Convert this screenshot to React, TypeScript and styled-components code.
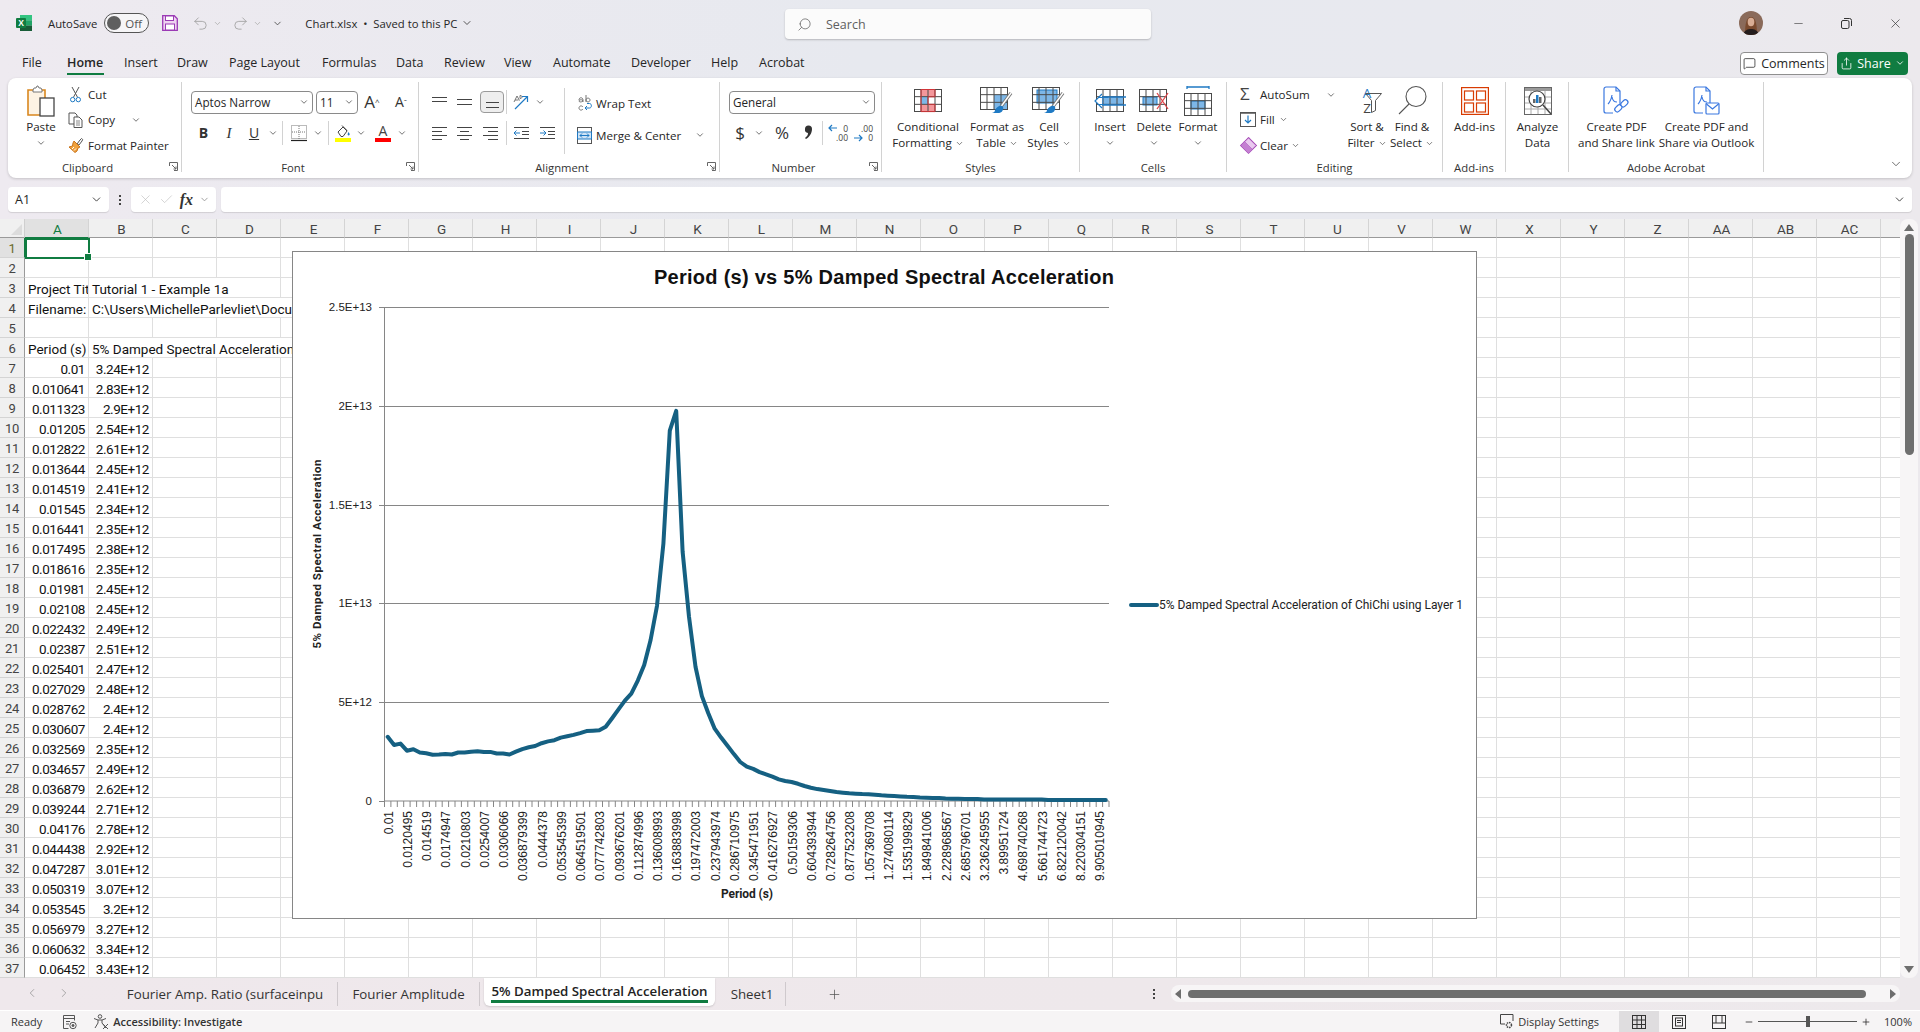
import React from 'react';
import styled, { createGlobalStyle } from 'styled-components';
import { ChevronDown, Search, Minus, X, Check, Undo2, Redo2, ChevronLeft, ChevronRight, Plus, MessageSquare, Share } from 'lucide-react';

const UI = `'Open Sans', 'Noto Sans', sans-serif`;
const CELL = `Roboto, 'Liberation Sans', sans-serif`;
const GREEN = '#107c41';

const GlobalStyle = createGlobalStyle`
  html, body { margin: 0; padding: 0; background: #ece9ee; }
  * { box-sizing: border-box; }
  svg { overflow: visible; }
`;

const Page = styled.div`
  width: 1920px;
  height: 1032px;
  display: flex;
  flex-direction: column;
  overflow: hidden;
  font-family: ${UI};
  font-size: 11.6px;
  color: #262626;
  background: linear-gradient(90deg, #eeeaf0 0%, #e7e9ef 45%, #e8e9ef 75%, #ece9ed 100%);
`;

/* ---------- title bar ---------- */
const TitleBar = styled.div`
  height: 46px;
  display: flex;
  align-items: center;
  padding-left: 16px;
  position: relative;
`;
const TitleItem = styled.div<{ $at: number }>`
  margin-left: ${p => p.$at}px;
  display: flex;
  align-items: center;
  gap: 4px;
  white-space: nowrap;
  font-size: 11.3px;
`;
const Toggle = styled.div`
  width: 45px;
  height: 20px;
  border: 1px solid #555;
  border-radius: 10px;
  display: flex;
  align-items: center;
  padding-left: 2px;
  gap: 4px;
  background: #f6f5f7;
  font-size: 11.5px;
  color: #555;
  &::before {
    content: '';
    width: 14px;
    height: 14px;
    border-radius: 50%;
    background: #5f5f5f;
  }
`;
const SearchBox = styled.div`
  position: absolute;
  left: 785px;
  top: 9px;
  width: 366px;
  height: 30px;
  background: #fbfbfb;
  border-radius: 4px;
  box-shadow: 0 1px 2px rgba(0, 0, 0, 0.22);
  display: flex;
  align-items: center;
  padding-left: 12px;
  gap: 14px;
  color: #5f5f5f;
  font-size: 12.5px;
`;
const WindowControls = styled.div`
  margin-left: auto;
  display: flex;
  align-items: center;
  padding-right: 17px;
  gap: 36px;
  color: #333;
`;
const Avatar = styled.div`
  width: 24px;
  height: 24px;
  margin-right: -7px;
  border-radius: 50%;
  overflow: hidden;
  line-height: 0;
`;

/* ---------- menu ---------- */
const MenuBar = styled.div`
  height: 32px;
  display: flex;
  align-items: center;
  padding: 2px 12px 0 22px;
`;
const MenuItem = styled.div<{ $w: number; $active?: boolean }>`
  width: ${p => p.$w}px;
  font-size: 12.5px;
  line-height: 22px;
  position: relative;
  font-weight: ${p => (p.$active ? 600 : 400)};
  ${p => p.$active && `
    &::after {
      content: '';
      position: absolute;
      left: 0;
      width: 37px;
      bottom: -1px;
      height: 2px;
      background: ${GREEN};
    }
  `}
`;
const MenuRight = styled.div`
  margin-left: auto;
  display: flex;
  gap: 9px;
`;
const CommentsButton = styled.div`
  width: 88px;
  height: 23px;
  background: #fff;
  border: 1px solid #8f8f8f;
  border-radius: 4px;
  display: flex;
  align-items: center;
  justify-content: center;
  gap: 5px;
  font-size: 12.5px;
`;
const ShareButton = styled.div`
  width: 71px;
  height: 23px;
  background: ${GREEN};
  color: #fff;
  border-radius: 4px;
  display: flex;
  align-items: center;
  justify-content: center;
  gap: 4px;
  font-size: 12.5px;
`;

/* ---------- ribbon ---------- */
const Ribbon = styled.div`
  margin: 0 8px;
  height: 100px;
  padding-top: 4px;
  background: #fff;
  border-radius: 8px;
  box-shadow: 0 1px 3px rgba(0, 0, 0, 0.18);
  display: flex;
  position: relative;
`;
const Group = styled.div<{ $w: number }>`
  width: ${p => p.$w}px;
  height: 90px;
  flex: none;
  display: flex;
  flex-direction: column;
  border-right: 1px solid #d2d2d2;
  position: relative;
`;
const GroupBody = styled.div<{ $pad?: number }>`
  height: 76px;
  display: flex;
  padding-left: ${p => p.$pad ?? 0}px;
`;
const GroupLabel = styled.div<{ $launcher?: boolean }>`
  height: 14px;
  line-height: 20px;
  text-align: center;
  font-size: 11.3px;
  color: #333;
  padding-right: ${p => (p.$launcher ? 14 : 0)}px;
`;
const Launcher = styled.svg`
  position: absolute;
  right: 3px;
  bottom: 1px;
  width: 9px;
  height: 9px;
`;
const Big = styled.div<{ $w: number }>`
  width: ${p => p.$w}px;
  flex: none;
  display: flex;
  flex-direction: column;
  align-items: center;
  text-align: center;
  white-space: nowrap;
  line-height: 16px;
`;
const BigIcon = styled.div`
  height: 37px;
  display: flex;
  align-items: center;
  justify-content: center;
`;
const BigLine = styled.div`
  height: 16px;
  display: flex;
  align-items: center;
  gap: 3px;
`;
const Column = styled.div<{ $w?: number; $top?: number }>`
  width: ${p => (p.$w ? `${p.$w}px` : 'auto')};
  flex: none;
  display: flex;
  flex-direction: column;
  padding-top: ${p => p.$top ?? 0}px;
`;
const SmallRow = styled.div<{ $h?: number }>`
  height: ${p => p.$h ?? 26}px;
  display: flex;
  align-items: center;
  white-space: nowrap;
`;
const SmallIcon = styled.div<{ $w?: number; $indent?: number }>`
  width: ${p => p.$w ?? 20}px;
  padding-left: ${p => p.$indent ?? 0}px;
  flex: none;
  display: flex;
  align-items: center;
`;
const Trail = styled.span<{ $ml: number }>`
  margin-left: ${p => p.$ml}px;
  display: flex;
`;
const ToolRow = styled.div<{ $top?: number }>`
  height: 22px;
  margin-top: ${p => p.$top ?? 9}px;
  display: flex;
  align-items: center;
`;
const Slot = styled.div<{ $w: number; $on?: boolean; $ml?: number }>`
  width: ${p => p.$w}px;
  height: 22px;
  margin-left: ${p => p.$ml ?? 0}px;
  flex: none;
  display: flex;
  align-items: center;
  justify-content: center;
  ${p => p.$on && `
    background: #eeeeee;
    border: 1px solid #9a9a9a;
    border-radius: 4px;
  `}
`;
const ToolSep = styled.div<{ $h?: number }>`
  width: 1px;
  height: ${p => p.$h ?? 24}px;
  flex: none;
  background: #d2d2d2;
`;
const Combo = styled.div<{ $w: number; $ml?: number }>`
  width: ${p => p.$w}px;
  height: 23px;
  margin-left: ${p => p.$ml ?? 0}px;
  flex: none;
  border: 1px solid #8a8a8a;
  border-radius: 4px;
  display: flex;
  align-items: center;
  justify-content: space-between;
  padding: 0 3px;
  font-size: 11.7px;
`;
const Glyph = styled.span<{ $size?: number; $weight?: number; $serif?: boolean; $italic?: boolean; $under?: boolean; $color?: string }>`
  font-family: ${p => (p.$serif ? `'Liberation Serif', serif` : UI)};
  font-size: ${p => p.$size ?? 13}px;
  font-weight: ${p => p.$weight ?? 400};
  font-style: ${p => (p.$italic ? 'italic' : 'normal')};
  text-decoration: ${p => (p.$under ? 'underline' : 'none')};
  color: ${p => p.$color ?? '#333'};
  line-height: 1.2;
`;
const CollapseIcon = styled.div`
  position: absolute;
  right: 9px;
  bottom: 7px;
  line-height: 0;
  color: #444;
`;

/* ---------- formula bar ---------- */
const FormulaBar = styled.div`
  margin: 9px 8px 7px;
  height: 25px;
  display: flex;
  align-items: stretch;
`;
const Field = styled.div<{ $w?: number; $ml?: number }>`
  width: ${p => (p.$w ? `${p.$w}px` : 'auto')};
  flex: ${p => (p.$w ? 'none' : 1)};
  margin-left: ${p => p.$ml ?? 0}px;
  background: #fff;
  border-radius: 4px;
  box-shadow: 0 1px 1px rgba(0, 0, 0, 0.12);
  display: flex;
  align-items: center;
  justify-content: space-between;
  padding: 0 6px 0 7px;
  font-size: 12.5px;
`;
const DotsColumn = styled.div<{ $ml: number | string }>`
  margin-left: ${p => (typeof p.$ml === 'number' ? `${p.$ml}px` : p.$ml)};
  width: 3px;
  display: flex;
  flex-direction: column;
  justify-content: center;
  gap: 2px;
  & > i {
    width: 2px;
    height: 2px;
    background: #444;
  }
`;
const Fx = styled.span`
  font-family: 'Liberation Serif', serif;
  font-style: italic;
  font-size: 16px;
  font-weight: 700;
  color: #333;
`;

/* ---------- sheet ---------- */
const SheetArea = styled.div`
  height: 759px;
  display: flex;
  position: relative;
`;
const Sheet = styled.div`
  width: 1900px;
  background: #fff;
  overflow: hidden;
  flex: none;
`;
const HeaderRow = styled.div`
  display: flex;
  height: 19px;
`;
const Corner = styled.div`
  width: 25px;
  flex: none;
  background: #f0f0f0;
  border-right: 1px solid #cfcfcf;
  border-bottom: 1px solid #9a9a9a;
  position: relative;
  &::after {
    content: '';
    position: absolute;
    right: 2px;
    bottom: 2px;
    border-left: 11px solid transparent;
    border-bottom: 11px solid #dcdcdc;
  }
`;
const ColHead = styled.div<{ $on?: boolean }>`
  width: 64px;
  flex: none;
  padding-left: 2px;
  background: ${p => (p.$on ? '#e1e1e1' : '#f0f0f0')};
  border-right: 1px solid #d4d4d4;
  border-bottom: 1px solid ${p => (p.$on ? GREEN : '#9a9a9a')};
  text-align: center;
  font-family: ${CELL};
  font-size: 13.5px;
  line-height: 20px;
  color: ${p => (p.$on ? GREEN : '#444')};
`;
const Row = styled.div`
  display: flex;
  height: 20px;
`;
const RowHead = styled.div<{ $on?: boolean }>`
  width: 25px;
  flex: none;
  background: ${p => (p.$on ? '#e1e1e1' : '#f0f0f0')};
  border-right: 1px solid ${p => (p.$on ? GREEN : '#9a9a9a')};
  border-bottom: 1px solid #d4d4d4;
  text-align: center;
  font-family: ${CELL};
  font-size: 13px;
  line-height: 22px;
  letter-spacing: -0.3px;
  color: ${p => (p.$on ? '#6b6b2a' : '#444')};
`;
const Cell = styled.div<{ $span?: number; $number?: boolean }>`
  width: ${p => 64 * (p.$span ?? 1)}px;
  flex: none;
  border-right: 1px solid #dfdfdf;
  border-bottom: 1px solid #dfdfdf;
  padding: 0 3px;
  font-family: ${CELL};
  font-size: 13.5px;
  letter-spacing: ${p => (p.$number ? '-0.45px' : '0')};
  line-height: 22px;
  color: #111;
  white-space: nowrap;
  overflow: hidden;
  text-align: ${p => (p.$number ? 'right' : 'left')};
`;
const ActiveCell = styled.div`
  position: absolute;
  left: 25px;
  top: 19px;
  width: 65px;
  height: 21px;
  border: 2px solid ${GREEN};
  &::after {
    content: '';
    position: absolute;
    right: -4px;
    bottom: -4px;
    width: 6px;
    height: 6px;
    background: ${GREEN};
    border: 1px solid #fff;
  }
`;
const ChartCard = styled.div`
  position: absolute;
  left: 292px;
  top: 32px;
  width: 1185px;
  height: 668px;
  background: #fff;
  border: 1px solid #868686;
  line-height: 0;
`;
const ScrollRail = styled.div`
  width: 18px;
  height: 759px;
  flex: none;
  background: #f7f5f6;
  border-radius: 8px;
  display: flex;
  flex-direction: column;
  align-items: center;
  padding: 5px 0;
`;
const ScrollThumb = styled.div`
  width: 9px;
  height: 221px;
  margin-top: 3px;
  background: #6e6e6e;
  border-radius: 5px;
`;
const ArrowV = styled.div<{ $down?: boolean }>`
  width: 0;
  height: 0;
  margin-top: ${p => (p.$down ? 'auto' : 0)};
  border-left: 5px solid transparent;
  border-right: 5px solid transparent;
  ${p => (p.$down ? 'border-top: 7px solid #6e6e6e;' : 'border-bottom: 7px solid #6e6e6e;')}
`;

/* ---------- sheet tabs ---------- */
const TabBar = styled.div`
  height: 32px;
  display: flex;
  background: linear-gradient(90deg, #efe8ec, #eee8eb 60%, #ede9ec);
`;
const TabNav = styled.div`
  width: 113px;
  flex: none;
  display: flex;
  gap: 18px;
  align-items: center;
  padding: 0 0 2px 25px;
  color: #8a8a8a;
`;
const Tab = styled.div<{ $w: number; $pad?: number }>`
  width: ${p => p.$w}px;
  height: 24px;
  margin-top: 4px;
  padding-left: ${p => p.$pad ?? 0}px;
  flex: none;
  border-right: 1px solid #cfc9cd;
  text-align: center;
  font-size: 13.3px;
  line-height: 24px;
  white-space: nowrap;
  color: #333;
`;
const ActiveTab = styled.div`
  width: 231px;
  height: 28px;
  margin-left: 4px;
  flex: none;
  background: #fff;
  border-radius: 0 0 6px 6px;
  box-shadow: 0 1px 2px rgba(0, 0, 0, 0.14);
  display: flex;
  justify-content: center;
`;
const ActiveTabText = styled.div`
  height: 25px;
  padding-top: 3px;
  border-bottom: 3px solid ${GREEN};
  font-size: 13.3px;
  font-weight: 600;
  line-height: 20px;
  white-space: nowrap;
  color: #222;
`;
const AddTab = styled.div`
  width: 96px;
  flex: none;
  display: flex;
  align-items: center;
  justify-content: center;
  color: #555;
`;
const HorizontalScroll = styled.div`
  width: 729px;
  height: 17px;
  margin: 7px 20px 0 15px;
  flex: none;
  background: #f7f5f6;
  border-radius: 8px;
  display: flex;
  align-items: center;
  padding: 0 4px;
`;
const HThumb = styled.div`
  width: 678px;
  height: 8px;
  margin-left: 7px;
  margin-right: auto;
  background: #6e6e6e;
  border-radius: 4px;
`;
const ArrowH = styled.div<{ $right?: boolean }>`
  width: 0;
  height: 0;
  border-top: 5px solid transparent;
  border-bottom: 5px solid transparent;
  ${p => (p.$right ? 'border-left: 6px solid #6e6e6e;' : 'border-right: 6px solid #6e6e6e;')}
`;

/* ---------- status bar ---------- */
const StatusBar = styled.div`
  height: 22px;
  display: flex;
  align-items: center;
  background: #f6f4f5;
  border-top: 1px solid #fff;
  font-size: 11px;
  color: #333;
  padding: 0 8px 0 11px;
`;
const StatusItem = styled.div<{ $ml?: number | string; $bold?: boolean }>`
  margin-left: ${p => (typeof p.$ml === 'string' ? p.$ml : `${p.$ml ?? 0}px`)};
  display: flex;
  align-items: center;
  gap: 4px;
  white-space: nowrap;
  font-weight: ${p => (p.$bold ? 600 : 400)};
`;
const ViewButton = styled.div<{ $on?: boolean }>`
  width: 40px;
  height: 21px;
  display: flex;
  align-items: center;
  justify-content: center;
  background: ${p => (p.$on ? '#dfdddf' : 'transparent')};
`;
const ViewGroup = styled.div`
  margin-left: 20px;
  display: flex;
`;
const ZoomTrack = styled.div`
  width: 99px;
  height: 1px;
  background: #555;
  position: relative;
  &::after {
    content: '';
    position: absolute;
    left: 48px;
    top: -5px;
    width: 4px;
    height: 11px;
    background: #555;
  }
`;

/* ---------- icons ---------- */
const Chev = ({ size = 10 }: { size?: number }) => <ChevronDown size={size} strokeWidth={1.8} color="#444" />;

const BLUE = '#1f7ac4';

const ExcelLogo = () => (
  <svg width="16" height="16" viewBox="0 0 16 16">
    <rect x="4" y="0" width="12" height="5.4" fill="#33c481" />
    <rect x="4" y="5.3" width="12" height="5.4" fill="#21a366" />
    <rect x="4" y="10.6" width="12" height="5.4" fill="#185c37" />
    <rect x="0" y="3" width="10" height="10" rx="1" fill="#107c41" />
    <text x="5" y="11" fontSize="8.5" fontWeight="700" fill="#fff" textAnchor="middle" fontFamily="Liberation Sans">X</text>
  </svg>
);
const SaveIcon = () => (
  <svg width="16" height="16" viewBox="0 0 16 16">
    <path d="M.7.7h11.6l3 3v11.6H.7z" fill="#eed3f0" stroke="#9b3bb5" strokeWidth="1.3" />
    <rect x="3.5" y="1" width="8" height="4.5" fill="#fff" stroke="#9b3bb5" />
    <rect x="3.5" y="9" width="9" height="6" fill="#fff" stroke="#9b3bb5" />
  </svg>
);
const PasteIcon = () => (
  <svg width="30" height="32" viewBox="0 0 30 32">
    <path d="M2 5h17v25H2z" fill="#fdf3e4" stroke="#d9871e" strokeWidth="1.6" />
    <path d="M7 5l1-2h2l1-2h1l1 2h2l1 2v2H7z" fill="#fff" stroke="#777" />
    <rect x="14" y="13" width="14" height="18" fill="#fff" stroke="#444" strokeWidth="1.3" />
  </svg>
);
const CutIcon = () => (
  <svg width="11" height="17" viewBox="0 0 11 17" fill="none" stroke="#555" strokeWidth="1">
    <path d="M2 1l5.4 10M9 1L3.6 11" />
    <circle cx="2.7" cy="13.6" r="2.2" stroke={BLUE} />
    <circle cx="8.3" cy="13.6" r="2.2" stroke={BLUE} />
  </svg>
);
const CopyIcon = () => (
  <svg width="15" height="16" viewBox="0 0 15 16" fill="#fff" stroke="#555">
    <path d="M1 1h6l2 2v9H1z" />
    <path d="M6 5h5l3 3v7.5H6z" />
    <path d="M8 9h4M8 11h4M8 13h4" stroke="#888" />
  </svg>
);
const PainterIcon = () => (
  <svg width="16" height="16" viewBox="0 0 16 16">
    <path d="M9 7l3-4 1.5-1.5 1.2 1L14 4l-3 4z" fill="#fff" stroke="#555" />
    <path d="M6 4l6 6-2 1-1 3-2 1.5L1 10l3.5-1L5 6z" fill="#f0a23e" stroke="#c9731a" />
    <path d="M4 12l2-2M6 13.5l2-2" stroke="#fff" />
  </svg>
);
const Launch = () => (
  <Launcher viewBox="0 0 9 9" fill="none" stroke="#666">
    <path d="M.5 4V.5h8v8H5" />
    <path d="M3 3l4 4M7 4.5V7H4.5" />
  </Launcher>
);
const LineIcon = ({ rows, w = 15, color = '#444' }: { rows: [number, number, number][]; w?: number; color?: string }) => (
  <svg width={w} height="14" viewBox={`0 0 ${w} 14`} stroke={color} strokeWidth="1">
    {rows.map(([a, b, y]) => <path key={y} d={`M${a} ${y + 0.5}H${b}`} />)}
  </svg>
);
const BordersIcon = () => (
  <svg width="16" height="16" viewBox="0 0 16 16" fill="none" stroke="#777" strokeDasharray="1 1">
    <rect x=".5" y=".5" width="15" height="13" />
    <path d="M8 1v13M1 7h14" />
    <path d="M0 15.5h16" stroke="#222" strokeDasharray="none" strokeWidth="1.2" />
  </svg>
);
const FillIcon = () => (
  <svg width="16" height="18" viewBox="0 0 16 18">
    <path d="M3 8l5-5 4 4-4 5.5H6z" fill="#fff" stroke="#444" />
    <path d="M7 1.5l5 5" stroke="#444" fill="none" />
    <path d="M13.5 8c1 1.500 1.500 2.300 1 3s-1.600.6-1.800-.2.300-1.600.8-2.800z" fill={BLUE} />
    <rect y="14" width="16" height="4" fill="#ffff00" />
  </svg>
);
const FontColorBar = styled.div`
  width: 16px;
  height: 18px;
  display: flex;
  flex-direction: column;
  align-items: center;
  font-size: 14px;
  line-height: 14px;
  color: #444;
  &::after {
    content: '';
    width: 16px;
    height: 4px;
    flex: none;
    background: #ff0000;
  }
`;
const OrientIcon = () => (
  <svg width="18" height="18" viewBox="0 0 18 18" fill="none">
    <path d="M2 9l3-6 2.500 4.500M3 7h3.500M8 2.500c1.500 0 2 .6 2 1.500s-.6 1.500-2 1.500z" stroke="#666" strokeWidth=".9" />
    <path d="M3 16L15 4M10 3.5h5.500V9" stroke={BLUE} strokeWidth="1.2" />
  </svg>
);
const IndentIcon = ({ flip }: { flip?: boolean }) => (
  <svg width="15" height="14" viewBox="0 0 15 14" fill="none" stroke="#444">
    <path d="M0 1.5h15M8 5.5h7M8 8.5h7M0 12.5h15" />
    <path d={flip ? 'M0 7h6M3.5 4.5L6 7l-2.5 2.500' : 'M6 7H0M2.5 4.5L0 7l2.5 2.500'} stroke={BLUE} />
  </svg>
);
const WrapIcon = () => (
  <svg width="14" height="18" viewBox="0 0 14 18" fill="none">
    <path d="M1 6c0-3 4-3 4 0v2M5 6.500C3 5 1 6 1 7s2 1.500 4 0M8 1v7M8 6c0-2.500 4-2.500 4 0s-4 2.500-4 0M5 13c-1.500-2-4-1-4 1s2.500 3 4 1" stroke="#666" strokeWidth=".9" />
    <path d="M7 14h4.500c2.500 0 2.500-4.500 0-4.500H9M9 12l-2 2 2 2" stroke={BLUE} />
  </svg>
);
const MergeIcon = () => (
  <svg width="15" height="17" viewBox="0 0 15 17" fill="none">
    <rect x=".5" y=".5" width="14" height="16" stroke="#555" />
    <rect x=".5" y="5" width="14" height="7" fill="#cfe4f6" stroke={BLUE} />
    <path d="M3 8.5h9M5 6.500l-2 2 2 2M10 6.500l2 2-2 2" stroke={BLUE} />
  </svg>
);
const DecimalStack = styled.div`
  width: 14px;
  font-size: 8.5px;
  line-height: 9px;
  text-align: right;
  color: #444;
`;
const DecimalWrap = styled.div`
  width: 22px;
  height: 20px;
  display: flex;
  align-items: center;
  justify-content: flex-end;
  position: relative;
  & > svg {
    position: absolute;
    left: 2px;
  }
`;
const Decimals = ({ more }: { more?: boolean }) => (
  <DecimalWrap>
    <svg width="10" height="20" viewBox="0 0 10 20" fill="none" stroke={BLUE} strokeWidth="1.2">
      <path d={more ? 'M9 5H1M4 2L1 5l3 3' : 'M1 15h8M6 12l3 3-3 3'} />
    </svg>
    <DecimalStack>{more ? '0' : '.00'}<br />{more ? '.00' : '0'}</DecimalStack>
  </DecimalWrap>
);
const CommaIcon = () => (
  <svg width="9" height="16" viewBox="0 0 9 16">
    <path d="M1 4a3.5 3.5 0 1 1 7 0c0 4-2.500 8-6 10l-1-1c2-1.500 3-3 3-5A3.5 3.5 0 0 1 1 4z" fill="#333" />
  </svg>
);
const TableBase = ({ w = 28, h = 23, children }: { w?: number; h?: number; children?: React.ReactNode }) => (
  <g>
    {children}
    <g fill="none" stroke="#4a4a4a">
      <rect x=".5" y=".5" width={w - 1} height={h - 1} />
      <path d={`M${w / 4} 1v${h - 2}M${w / 2} 1v${h - 2}M${(3 * w) / 4} 1v${h - 2}M1 ${h / 3}h${w - 2}M1 ${(2 * h) / 3}h${w - 2}`} />
    </g>
  </g>
);
const CFIcon = () => (
  <svg width="28" height="23" viewBox="0 0 28 23">
    <TableBase>
      <rect x="7" y="0" width="14" height="7.6" fill="#f4979b" />
      <rect x="7" y="7.6" width="7" height="7.6" fill="#7db7e8" />
      <rect x="7" y="15.3" width="14" height="7.7" fill="#f4979b" />
    </TableBase>
    <path d="M7 .5h14v7.3H14v7.5h7v7.3H7z" fill="none" stroke="#d13438" />
  </svg>
);
const BrushStroke = () => (
  <g>
    <path d="M31 6L20 21" stroke="#777" strokeWidth="3.2" />
    <path d="M31 6L20 21" stroke="#fff" strokeWidth="1.4" />
    <path d="M15 23c3-5 7-5 8-3s-1 6-4 6-4 0-7 0c2-.5 3-1.500 3-3z" fill={BLUE} />
  </g>
);
const FormatTableIcon = () => (
  <svg width="34" height="28" viewBox="0 0 34 28">
    <TableBase>
      <rect x="14" y="7.6" width="14" height="15.4" fill="#7db7e8" />
    </TableBase>
    <BrushStroke />
  </svg>
);
const CellStylesIcon = () => (
  <svg width="34" height="28" viewBox="0 0 34 28">
    <TableBase>
      <rect x="5" y="3" width="20" height="13" fill="#7db7e8" stroke={BLUE} />
    </TableBase>
    <BrushStroke />
  </svg>
);
const InsertIcon = () => (
  <svg width="32" height="24" viewBox="0 0 32 24">
    <g transform="translate(2 0)">
      <TableBase>
        <rect x="7" y="8" width="21" height="8" fill="#7db7e8" />
      </TableBase>
    </g>
    <path d="M32 8H8v8h24" fill="none" stroke={BLUE} strokeWidth="1.3" />
    <path d="M14 8.5H4.500M14 15.5H4.500M8 5L1 12l7 7" fill="#fff" stroke={BLUE} strokeWidth="1.2" />
  </svg>
);
const DeleteIcon = () => (
  <svg width="30" height="24" viewBox="0 0 30 24">
    <TableBase>
      <rect x="4" y="8" width="14" height="8" fill="#7db7e8" stroke={BLUE} />
    </TableBase>
    <path d="M18 4l11 16M29 4L18 20" stroke="#e0464a" strokeWidth="1.3" />
  </svg>
);
const FormatCellsIcon = () => (
  <svg width="28" height="32" viewBox="0 0 28 32">
    <path d="M3 1h22M3 0v3M25 0v3" stroke={BLUE} strokeWidth="1.3" transform="translate(0 1)" />
    <g transform="translate(0 8)">
      <TableBase>
        <rect x="7" y="8" width="14" height="8" fill="#7db7e8" stroke={BLUE} />
      </TableBase>
    </g>
  </svg>
);
const FillDownIcon = () => (
  <svg width="16" height="15" viewBox="0 0 16 15" fill="none">
    <rect x=".5" y=".5" width="15" height="14" stroke="#555" />
    <path d="M0 1h16" stroke="#555" strokeWidth="1.5" />
    <path d="M8 3.500v7.500M5 8l3 3 3-3" stroke={BLUE} strokeWidth="1.2" />
  </svg>
);
const ClearIcon = () => (
  <svg width="17" height="17" viewBox="0 0 17 17">
    <path d="M8.500.8l7.700 7.700-7.700 7.700L.8 8.500z" fill="#fff" stroke="#a64ab7" strokeWidth="1.3" />
    <path d="M8.500.8l7.700 7.700-4 4-7.700-7.700z" fill="#e9c9ef" stroke="#a64ab7" />
    <path d="M1 8.500l3.500-3.700 7.700 7.700-3.700 3.700z" fill="#c47fd2" />
  </svg>
);
const SortStack = styled.div`
  width: 30px;
  height: 29px;
  display: flex;
  flex-direction: column;
  font-size: 13.5px;
  line-height: 14.5px;
  position: relative;
  & > svg {
    position: absolute;
    left: 13px;
    top: 7px;
  }
`;
const SortLetter = styled.span<{ $blue?: boolean }>`
  color: ${p => (p.$blue ? BLUE : '#444')};
  height: 14.5px;
`;
const SortIcon = () => (
  <SortStack>
    <SortLetter $blue>A</SortLetter>
    <SortLetter>Z</SortLetter>
    <svg width="17" height="20" viewBox="0 0 17 20" fill="none" stroke="#555"><path d="M.5.5h16l-6 7v10l-4 2v-12z" /></svg>
  </SortStack>
);
const FindIcon = () => (
  <svg width="29" height="29" viewBox="0 0 29 29" fill="none" stroke="#555" strokeWidth="1.1">
    <circle cx="18" cy="10.5" r="10" />
    <path d="M11 18L1 28" />
  </svg>
);
const AddInsIcon = () => (
  <svg width="28" height="28" viewBox="0 0 28 28" fill="none" stroke="#d83b01" strokeWidth="1.2">
    <rect x=".6" y=".6" width="26.8" height="26.8" />
    <rect x="3.5" y="4" width="9" height="9" />
    <rect x="15.5" y="4" width="9" height="9" />
    <rect x="3.5" y="16" width="9" height="9" />
    <rect x="15.5" y="16" width="9" height="9" />
  </svg>
);
const AnalyzeIcon = () => (
  <svg width="28" height="28" viewBox="0 0 28 28" fill="none">
    <rect x=".5" y=".5" width="27" height="27" stroke="#666" fill="#fff" />
    <rect x="1" y="1" width="26" height="3" fill="#9a9a9a" />
    <path d="M1 10h26M1 16h26M1 22h26M7 4v23M14 4v23M21 4v23" stroke="#aaa" />
    <circle cx="13" cy="12" r="8" fill="#fff" stroke="#444" strokeWidth="1.2" />
    <path d="M19 18l8 9" stroke="#444" strokeWidth="1.5" />
    <rect x="9" y="12" width="2.5" height="4" fill="#666" />
    <rect x="12" y="8" width="2.5" height="8" fill={BLUE} />
    <rect x="15" y="10" width="2.5" height="6" fill="#666" />
  </svg>
);
const PdfDoc = ({ extra }: { extra: React.ReactNode }) => (
  <svg width="27" height="30" viewBox="0 0 27 30" fill="none" stroke="#3b78e0" strokeWidth="1.2">
    <path d="M17 18V5l-4-4H3a2 2 0 0 0-2 2v22a2 2 0 0 0 2 2h7" />
    <path d="M13 1v4h4" />
    <path d="M9 9c-.5 3-2 7-4 9M9 11c.5 3 2.500 5 5 5" />
    {extra}
  </svg>
);
const PdfLink = () => (
  <PdfDoc extra={<g><rect x="11" y="20" width="8" height="5" rx="2.5" transform="rotate(-45 15 22)" fill="#fff" /><rect x="17" y="15" width="8" height="5" rx="2.5" transform="rotate(-45 21 17)" fill="#fff" /></g>} />
);
const PdfMail = () => (
  <PdfDoc extra={<g><rect x="13" y="17" width="13" height="11" rx="1" fill="#fff" /><path d="M13.5 18l6 5 6-5" /></g>} />
);
const AvatarPicture = () => (
  <svg width="24" height="24" viewBox="0 0 24 24">
    <rect width="24" height="24" fill="#8a6a5a" />
    <path d="M6 24c0-10 1-18 6-18s6 8 6 18z" fill="#7a4a2e" />
    <ellipse cx="12" cy="11" rx="3.3" ry="4.2" fill="#d9ad94" />
    <path d="M4 24c1-5 5-6 8-6s7 1 8 6z" fill="#241d1d" />
  </svg>
);
const SheetViewIcon = () => (
  <svg width="16" height="16" viewBox="0 0 16 16" fill="none" stroke="#555">
    <path d="M1.5 1.5h11v5M1.5 1.5v13h5" />
    <path d="M1.5 4.5h11M4 7.5h4M4 10h3" />
    <circle cx="11" cy="11.5" r="3.2" />
    <circle cx="11" cy="11.5" r="1" fill="#555" />
  </svg>
);
const AccessIcon = () => (
  <svg width="16" height="16" viewBox="0 0 16 16" fill="none" stroke="#555">
    <circle cx="7" cy="2.5" r="1.8" />
    <path d="M1 4.5l4 1.500h4l4-1.500M5 6v3l-3 5M9 6v3l4 5" />
    <path d="M10 10l5 5M15 10l-5 5" />
  </svg>
);
const DisplayIcon = () => (
  <svg width="14" height="16" viewBox="0 0 14 16" fill="none" stroke="#444">
    <path d="M5 10H.5V.5h12.500V7" />
    <circle cx="9" cy="11" r="2.5" strokeDasharray="1.5 .8" strokeWidth="1.5" />
  </svg>
);
const NormalViewIcon = () => (
  <svg width="14" height="14" viewBox="0 0 14 14" fill="none" stroke="#333">
    <rect x=".5" y=".5" width="13" height="13" />
    <path d="M5 1v12M9.5 1v12M1 5h12M1 9.5h12" />
  </svg>
);
const PageViewIcon = () => (
  <svg width="14" height="14" viewBox="0 0 14 14" fill="none" stroke="#333">
    <rect x=".5" y=".5" width="13" height="13" />
    <rect x="3.5" y="3" width="7" height="8" />
    <path d="M5 5.5h4M5 7.5h4" />
  </svg>
);
const BreakViewIcon = () => (
  <svg width="14" height="14" viewBox="0 0 14 14" fill="none" stroke="#333">
    <rect x=".5" y=".5" width="13" height="13" />
    <path d="M4 1v7h6V1M1 8h3M10 8h3" />
  </svg>
);

/* ---------- chart ---------- */
const X_LABELS = ['0.01', '0.0120495', '0.014519', '0.0174947', '0.0210803', '0.0254007', '0.0306066', '0.036879399', '0.0444378', '0.053545399', '0.064519501', '0.077742803', '0.093676201', '0.112874996', '0.136008993', '0.163883998', '0.197472003', '0.237943974', '0.286710975', '0.345471951', '0.416276927', '0.50159306', '0.604393944', '0.728264756', '0.877523208', '1.057369708', '1.274080114', '1.535199829', '1.849841006', '2.228968567', '2.685796701', '3.236245955', '3.89951724', '4.698740268', '5.661744723', '6.822120042', '8.220304151', '9.905010945'];

// values in units of 1E+12
const SERIES = [
  3.24, 2.83, 2.9, 2.54, 2.61, 2.45, 2.41, 2.34, 2.35, 2.38, 2.35, 2.45, 2.45, 2.49, 2.51, 2.47, 2.48, 2.4, 2.4, 2.35, 2.49, 2.62, 2.71, 2.78, 2.92, 3.01, 3.07, 3.2, 3.27, 3.34, 3.43,
  3.53, 3.55, 3.57, 3.75, 4.18, 4.63, 5.07, 5.42, 6.08, 6.87, 8.13, 9.86, 13.0, 18.7, 19.7, 12.6, 9.31, 6.78, 5.3, 4.43, 3.65, 3.2, 2.79, 2.37, 1.97, 1.73, 1.62, 1.46, 1.35, 1.23, 1.09, 1.01, 0.96, 0.87,
  0.76, 0.67, 0.6, 0.55, 0.5, 0.45, 0.42, 0.39, 0.37, 0.35, 0.34, 0.32, 0.29, 0.27, 0.25, 0.23, 0.21, 0.2, 0.17, 0.16, 0.15, 0.15, 0.12, 0.11, 0.11, 0.1, 0.1, 0.1,
  0.08, 0.08, 0.08, 0.08, 0.08, 0.08, 0.08, 0.08, 0.08, 0.08, 0.05, 0.05, 0.05, 0.05, 0.05, 0.05, 0.05, 0.05, 0.05, 0.05,
];

const AXIS_X = 384.5;
const AXIS_END = 1109;
const STEP = (AXIS_END - AXIS_X) / 113;
const ptX = (i: number) => AXIS_X + STEP * (i + 0.5);
const ptY = (v: number) => 801 - v * 19.8;
const Y_TICKS: [string, number][] = [['2.5E+13', 307], ['2E+13', 406], ['1.5E+13', 505], ['1E+13', 603], ['5E+12', 702], ['0', 801]];

const Chart = () => {
  const line = SERIES.map((v, i) => `${ptX(i).toFixed(1)},${ptY(v).toFixed(1)}`).join(' ');
  let ticks = '';
  for (let i = 0; i <= 113; i++) ticks += `M${(AXIS_X + i * STEP).toFixed(1)} 801v6`;
  return (
    <svg width="1183" height="666" viewBox="293 252 1183 666" fontFamily="Liberation Sans, sans-serif" fill="#222">
      <text x="884" y="284" fontSize="20" fontWeight="700" textAnchor="middle" textLength="460" fill="#111">Period (s) vs 5% Damped Spectral Acceleration</text>
      {Y_TICKS.slice(0, 5).map(([, y]) => <path key={y} d={`M${AXIS_X} ${y + 0.5}H${AXIS_END}`} stroke="#868686" />)}
      {Y_TICKS.map(([t, y]) => (
        <g key={t}>
          <path d={`M379 ${y + 0.5}H${AXIS_X}`} stroke="#868686" />
          <text x="372" y={y + 4} fontSize="11.5" textAnchor="end">{t}</text>
        </g>
      ))}
      <path d={`M${AXIS_X} 307V801H${AXIS_END}${ticks}`} stroke="#868686" fill="none" />
      <polyline points={line} fill="none" stroke="#156082" strokeWidth="4" strokeLinejoin="round" strokeLinecap="round" />
      {X_LABELS.map((t, i) => {
        const x = ptX(i * 3) + 5;
        return <text key={t} x={x} y="811" fontSize="12" textAnchor="end" transform={`rotate(-90 ${x} 811)`}>{t}</text>;
      })}
      <text x="321" y="554" fontFamily="Roboto, sans-serif" fontSize="11.5" fontWeight="700" textAnchor="middle" textLength="189" transform="rotate(-90 321 554)">5% Damped Spectral Acceleration</text>
      <text x="747" y="898" fontFamily="Roboto, sans-serif" fontSize="12" fontWeight="700" textAnchor="middle" textLength="52">Period (s)</text>
      <path d="M1131 605h26" stroke="#156082" strokeWidth="4" strokeLinecap="round" />
      <text x="1159" y="609" fontFamily="Roboto, sans-serif" fontSize="12" textLength="304">5% Damped Spectral Acceleration of ChiChi using Layer 1</text>
    </svg>
  );
};

/* ---------- sheet data ---------- */
const PERIODS = ['0.01', '0.010641', '0.011323', '0.01205', '0.012822', '0.013644', '0.014519', '0.01545', '0.016441', '0.017495', '0.018616', '0.01981', '0.02108', '0.022432', '0.02387', '0.025401', '0.027029', '0.028762', '0.030607', '0.032569', '0.034657', '0.036879', '0.039244', '0.04176', '0.044438', '0.047287', '0.050319', '0.053545', '0.056979', '0.060632', '0.06452'];
const ACCEL = ['3.24E+12', '2.83E+12', '2.9E+12', '2.54E+12', '2.61E+12', '2.45E+12', '2.41E+12', '2.34E+12', '2.35E+12', '2.38E+12', '2.35E+12', '2.45E+12', '2.45E+12', '2.49E+12', '2.51E+12', '2.47E+12', '2.48E+12', '2.4E+12', '2.4E+12', '2.35E+12', '2.49E+12', '2.62E+12', '2.71E+12', '2.78E+12', '2.92E+12', '3.01E+12', '3.07E+12', '3.2E+12', '3.27E+12', '3.34E+12', '3.43E+12'];
// the thirtieth column runs under the scroll rail, its label is not visible
const COLUMNS = 'ABCDEFGHIJKLMNOPQRSTUVWXYZ'.split('').concat(['AA', 'AB', 'AC', '']);

const TEXT_ROWS: Record<number, [string, string, number]> = {
  3: ['Project Tit', 'Tutorial 1 - Example 1a', 3],
  4: ['Filename:', 'C:\\Users\\MichelleParlevliet\\Docu', 4],
  6: ['Period (s)', '5% Damped Spectral Acceleration', 4],
};

const SheetRow = ({ n }: { n: number }) => {
  const text = TEXT_ROWS[n];
  const span = text ? text[2] : 1;
  const filled = n >= 7;
  const rest = Array.from({ length: COLUMNS.length - 1 - span });
  return (
    <Row>
      <RowHead $on={n === 1}>{n}</RowHead>
      <Cell $number={filled}>{text ? text[0] : filled ? PERIODS[n - 7] : ''}</Cell>
      <Cell $span={span} $number={filled}>{text ? text[1] : filled ? ACCEL[n - 7] : ''}</Cell>
      {rest.map((_, i) => <Cell key={i} />)}
    </Row>
  );
};

const MENU: [string, number][] = [['File', 45], ['Home', 57], ['Insert', 53], ['Draw', 52], ['Page Layout', 93], ['Formulas', 74], ['Data', 48], ['Review', 60], ['View', 49], ['Automate', 78], ['Developer', 80], ['Help', 48], ['Acrobat', 60]];

export default function App() {
  return (
    <Page>
      <GlobalStyle />
      <TitleBar>
        <ExcelLogo />
        <TitleItem $at={16}>AutoSave</TitleItem>
        <TitleItem $at={7}><Toggle>Off</Toggle></TitleItem>
        <TitleItem $at={13}><SaveIcon /></TitleItem>
        <TitleItem $at={14}><Undo2 size={17} color="#9f9f9f" strokeWidth={1.2} /><ChevronDown size={9} color="#aaa" /></TitleItem>
        <TitleItem $at={10}><Redo2 size={17} color="#9f9f9f" strokeWidth={1.2} /><ChevronDown size={9} color="#aaa" /></TitleItem>
        <TitleItem $at={10}><Chev size={11} /></TitleItem>
        <TitleItem $at={22}>Chart.xlsx&nbsp; •&nbsp; Saved to this PC <Chev size={12} /></TitleItem>
        <SearchBox><Search size={15} strokeWidth={1.2} style={{ transform: 'scaleX(-1)' }} />Search</SearchBox>
        <WindowControls>
          <Avatar><AvatarPicture /></Avatar>
          <Minus size={13} strokeWidth={1.1} />
          <svg width="11" height="11" viewBox="0 0 11 11" fill="none" stroke="#333"><rect x=".5" y="2.5" width="7.5" height="8" rx="1.5" /><path d="M3 .5h5.500a2 2 0 0 1 2 2V8" /></svg>
          <X size={15} strokeWidth={1.1} />
        </WindowControls>
      </TitleBar>

      <MenuBar>
        {MENU.map(([label, w]) => <MenuItem key={label} $w={w} $active={label === 'Home'}>{label}</MenuItem>)}
        <MenuRight>
          <CommentsButton><MessageSquare size={13} strokeWidth={1.4} />Comments</CommentsButton>
          <ShareButton><Share size={13} strokeWidth={1.5} />Share<ChevronDown size={10} /></ShareButton>
        </MenuRight>
      </MenuBar>

      <Ribbon>
        <Group $w={174}>
          <GroupBody $pad={18}>
            <Big $w={30}>
              <BigIcon><PasteIcon /></BigIcon>
              <BigLine>Paste</BigLine>
              <BigLine><Chev /></BigLine>
            </Big>
            <Column>
              <SmallRow><SmallIcon $w={32} $indent={14}><CutIcon /></SmallIcon>Cut</SmallRow>
              <SmallRow><SmallIcon $w={32} $indent={12}><CopyIcon /></SmallIcon>Copy<Trail $ml={16}><Chev /></Trail></SmallRow>
              <SmallRow><SmallIcon $w={32} $indent={12}><PainterIcon /></SmallIcon>Format Painter</SmallRow>
            </Column>
          </GroupBody>
          <GroupLabel $launcher>Clipboard</GroupLabel>
          <Launch />
        </Group>

        <Group $w={237}>
          <GroupBody $pad={9}>
            <Column>
              <ToolRow>
                <Combo $w={122}>Aptos Narrow<Chev /></Combo>
                <Combo $w={42} $ml={3}>11<Chev /></Combo>
                <Slot $w={22} $ml={3}><Glyph $size={17}>A</Glyph><Glyph $size={8}>^</Glyph></Slot>
                <Slot $w={24} $ml={6}><Glyph $size={14}>A</Glyph><Glyph $size={8}>ˇ</Glyph></Slot>
              </ToolRow>
              <ToolRow>
                <Slot $w={25}><Glyph $weight={700} $size={14}>B</Glyph></Slot>
                <Slot $w={26}><Glyph $italic $serif $size={15}>I</Glyph></Slot>
                <Slot $w={24}><Glyph $under $size={14}>U</Glyph></Slot>
                <Slot $w={14}><Chev /></Slot>
                <Slot $w={5}><ToolSep /></Slot>
                <Slot $w={27}><BordersIcon /></Slot>
                <Slot $w={12}><Chev /></Slot>
                <Slot $w={8}><ToolSep /></Slot>
                <Slot $w={22}><FillIcon /></Slot>
                <Slot $w={14}><Chev /></Slot>
                <Slot $w={30}><FontColorBar>A</FontColorBar></Slot>
                <Slot $w={8}><Chev /></Slot>
              </ToolRow>
            </Column>
          </GroupBody>
          <GroupLabel $launcher>Font</GroupLabel>
          <Launch />
        </Group>

        <Group $w={301}>
          <GroupBody $pad={7}>
            <Column $w={138}>
              <ToolRow>
                <Slot $w={26}><LineIcon rows={[[0, 15, 2], [0, 15, 6]]} /></Slot>
                <Slot $w={25}><LineIcon rows={[[0, 15, 4], [0, 15, 9]]} /></Slot>
                <Slot $w={3} />
                <Slot $w={24} $on><LineIcon rows={[[1, 14, 7], [1, 14, 12]]} /></Slot>
                <Slot $w={2} />
                <ToolSep />
                <Slot $w={28}><OrientIcon /></Slot>
                <Slot $w={9}><Chev /></Slot>
              </ToolRow>
              <ToolRow>
                <Slot $w={26}><LineIcon rows={[[0, 15, 1], [0, 10, 5], [0, 15, 9], [0, 10, 13]]} /></Slot>
                <Slot $w={25}><LineIcon rows={[[0, 15, 1], [3, 12, 5], [0, 15, 9], [3, 12, 13]]} /></Slot>
                <Slot $w={27}><LineIcon rows={[[0, 15, 1], [5, 15, 5], [0, 15, 9], [5, 15, 13]]} /></Slot>
                <Slot $w={2} />
                <ToolSep />
                <Slot $w={28}><IndentIcon /></Slot>
                <Slot $w={24}><IndentIcon flip /></Slot>
              </ToolRow>
            </Column>
            <Column $top={6}>
              <ToolSep $h={66} />
            </Column>
            <Column $top={9}>
              <SmallRow $h={24}><SmallIcon $w={31} $indent={13}><WrapIcon /></SmallIcon>Wrap Text</SmallRow>
              <SmallRow $h={40}><SmallIcon $w={31} $indent={12}><MergeIcon /></SmallIcon>Merge &amp; Center<Trail $ml={14}><Chev /></Trail></SmallRow>
            </Column>
          </GroupBody>
          <GroupLabel $launcher>Alignment</GroupLabel>
          <Launch />
        </Group>

        <Group $w={162}>
          <GroupBody $pad={9}>
            <Column>
              <ToolRow>
                <Combo $w={146}>General<Chev /></Combo>
              </ToolRow>
              <ToolRow>
                <Slot $w={22}><Glyph $size={17}>$</Glyph></Slot>
                <Slot $w={16}><Chev /></Slot>
                <Slot $w={30}><Glyph $size={17}>%</Glyph></Slot>
                <Slot $w={22}><CommaIcon /></Slot>
                <Slot $w={6}><ToolSep /></Slot>
                <Slot $w={24}><Decimals more /></Slot>
                <Slot $w={26}><Decimals /></Slot>
              </ToolRow>
            </Column>
          </GroupBody>
          <GroupLabel $launcher>Number</GroupLabel>
          <Launch />
        </Group>

        <Group $w={198}>
          <GroupBody $pad={4}>
            <Big $w={84}>
              <BigIcon><CFIcon /></BigIcon>
              <BigLine>Conditional</BigLine>
              <BigLine>Formatting <Chev size={9} /></BigLine>
            </Big>
            <Big $w={54}>
              <BigIcon><FormatTableIcon /></BigIcon>
              <BigLine>Format as</BigLine>
              <BigLine>Table <Chev size={9} /></BigLine>
            </Big>
            <Big $w={50}>
              <BigIcon><CellStylesIcon /></BigIcon>
              <BigLine>Cell</BigLine>
              <BigLine>Styles <Chev size={9} /></BigLine>
            </Big>
          </GroupBody>
          <GroupLabel>Styles</GroupLabel>
        </Group>

        <Group $w={147}>
          <GroupBody $pad={8}>
            <Big $w={44}>
              <BigIcon><InsertIcon /></BigIcon>
              <BigLine>Insert</BigLine>
              <BigLine><Chev /></BigLine>
            </Big>
            <Big $w={44}>
              <BigIcon><DeleteIcon /></BigIcon>
              <BigLine>Delete</BigLine>
              <BigLine><Chev /></BigLine>
            </Big>
            <Big $w={44}>
              <BigIcon><FormatCellsIcon /></BigIcon>
              <BigLine>Format</BigLine>
              <BigLine><Chev /></BigLine>
            </Big>
          </GroupBody>
          <GroupLabel>Cells</GroupLabel>
        </Group>

        <Group $w={216}>
          <GroupBody $pad={13}>
            <Column $w={104}>
              <SmallRow><SmallIcon><Glyph $size={17} $color="#444">Σ</Glyph></SmallIcon>AutoSum<Trail $ml={16}><Chev /></Trail></SmallRow>
              <SmallRow><SmallIcon><FillDownIcon /></SmallIcon>Fill<Trail $ml={4}><Chev size={9} /></Trail></SmallRow>
              <SmallRow><SmallIcon><ClearIcon /></SmallIcon>Clear<Trail $ml={3}><Chev size={9} /></Trail></SmallRow>
            </Column>
            <Big $w={46}>
              <BigIcon><SortIcon /></BigIcon>
              <BigLine>Sort &amp;</BigLine>
              <BigLine>Filter <Chev size={9} /></BigLine>
            </Big>
            <Big $w={44}>
              <BigIcon><FindIcon /></BigIcon>
              <BigLine>Find &amp;</BigLine>
              <BigLine>Select <Chev size={9} /></BigLine>
            </Big>
          </GroupBody>
          <GroupLabel>Editing</GroupLabel>
        </Group>

        <Group $w={63}>
          <GroupBody>
            <Big $w={63}>
              <BigIcon><AddInsIcon /></BigIcon>
              <BigLine>Add-ins</BigLine>
            </Big>
          </GroupBody>
          <GroupLabel>Add-ins</GroupLabel>
        </Group>

        <Group $w={63}>
          <GroupBody>
            <Big $w={63}>
              <BigIcon><AnalyzeIcon /></BigIcon>
              <BigLine>Analyze</BigLine>
              <BigLine>Data</BigLine>
            </Big>
          </GroupBody>
          <GroupLabel />
        </Group>

        <Group $w={195}>
          <GroupBody $pad={5}>
            <Big $w={85}>
              <BigIcon><PdfLink /></BigIcon>
              <BigLine>Create PDF</BigLine>
              <BigLine>and Share link</BigLine>
            </Big>
            <Big $w={95}>
              <BigIcon><PdfMail /></BigIcon>
              <BigLine>Create PDF and</BigLine>
              <BigLine>Share via Outlook</BigLine>
            </Big>
          </GroupBody>
          <GroupLabel>Adobe Acrobat</GroupLabel>
        </Group>
        <CollapseIcon><ChevronDown size={14} strokeWidth={1.3} /></CollapseIcon>
      </Ribbon>

      <FormulaBar>
        <Field $w={101}>A1<Chev size={13} /></Field>
        <DotsColumn $ml={10}><i /><i /><i /></DotsColumn>
        <Field $w={85} $ml={9}>
          <X size={15} strokeWidth={1} color="#bbb" />
          <Check size={15} strokeWidth={1} color="#bbb" />
          <Fx>fx</Fx>
          <ChevronDown size={11} color="#999" />
        </Field>
        <Field $ml={5}><span />
          <Chev size={13} />
        </Field>
      </FormulaBar>

      <SheetArea>
        <Sheet>
          <HeaderRow>
            <Corner />
            {COLUMNS.map(c => <ColHead key={c} $on={c === 'A'}>{c}</ColHead>)}
          </HeaderRow>
          {Array.from({ length: 37 }, (_, i) => <SheetRow key={i} n={i + 1} />)}
        </Sheet>
        <ScrollRail>
          <ArrowV />
          <ScrollThumb />
          <ArrowV $down />
        </ScrollRail>
        <ActiveCell />
        <ChartCard><Chart /></ChartCard>
      </SheetArea>

      <TabBar>
        <TabNav><ChevronLeft size={14} strokeWidth={1.2} /><ChevronRight size={14} strokeWidth={1.2} /></TabNav>
        <Tab $w={225}>Fourier Amp. Ratio (surfaceinpu</Tab>
        <Tab $w={142}>Fourier Amplitude</Tab>
        <ActiveTab><ActiveTabText>5% Damped Spectral Acceleration</ActiveTabText></ActiveTab>
        <Tab $w={71} $pad={4}>Sheet1</Tab>
        <AddTab><Plus size={15} strokeWidth={1.2} /></AddTab>
        <DotsColumn $ml="auto"><i /><i /><i /></DotsColumn>
        <HorizontalScroll>
          <ArrowH />
          <HThumb />
          <ArrowH $right />
        </HorizontalScroll>
      </TabBar>

      <StatusBar>
        <StatusItem>Ready</StatusItem>
        <StatusItem $ml={20}><SheetViewIcon /></StatusItem>
        <StatusItem $ml={15} $bold><AccessIcon />Accessibility: Investigate</StatusItem>
        <StatusItem $ml="auto"><DisplayIcon />Display Settings</StatusItem>
        <ViewGroup>
          <ViewButton $on><NormalViewIcon /></ViewButton>
          <ViewButton><PageViewIcon /></ViewButton>
          <ViewButton><BreakViewIcon /></ViewButton>
        </ViewGroup>
        <StatusItem $ml={5}>
          <Minus size={10} />
          <ZoomTrack />
          <Plus size={10} />
        </StatusItem>
        <StatusItem $ml={13}>100%</StatusItem>
      </StatusBar>
    </Page>
  );
}
